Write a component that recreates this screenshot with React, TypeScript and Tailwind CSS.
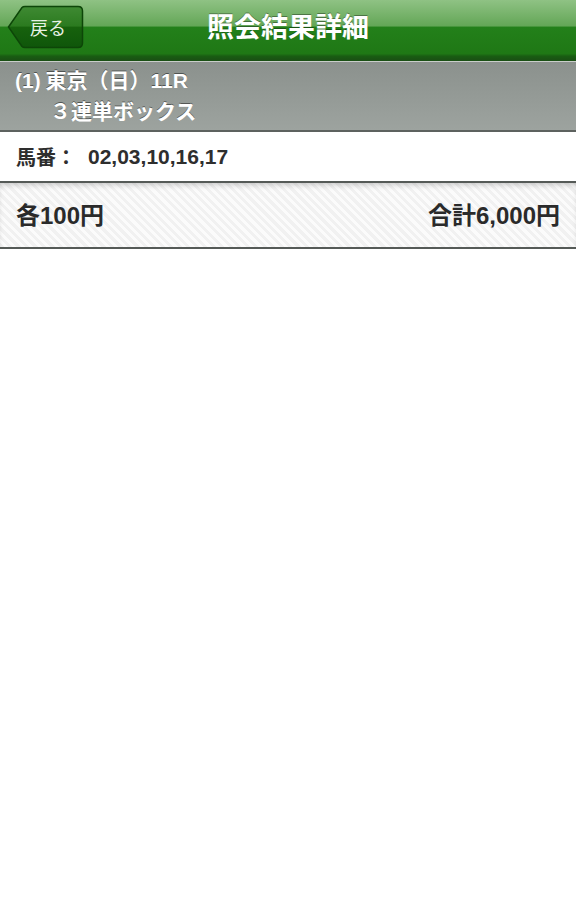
function BackButton() {
  return (
    <button
      type="button"
      className="relative ml-[7px] mt-[5px] flex h-[44px] w-[77px] items-center self-start"
    >
      <svg className="absolute inset-0" width="77" height="44" viewBox="0 0 77 44">
        <defs>
          <linearGradient id="bk" x1="0" y1="0" x2="0" y2="1">
            <stop offset="0" stopColor="#3f8a33" />
            <stop offset="0.48" stopColor="#2b7a1f" />
            <stop offset="0.5" stopColor="#17620d" />
            <stop offset="1" stopColor="#0f560a" />
          </linearGradient>
        </defs>
        <path
          d="M1.5 22 L15 2.5 Q16 1.5 18 1.5 L71 1.5 Q75.5 1.5 75.5 6 L75.5 38 Q75.5 42.5 71 42.5 L18 42.5 Q16 42.5 15 41.5 Z"
          fill="url(#bk)"
          stroke="#0d4608"
          strokeWidth="1.5"
        />
      </svg>
      <span className="relative ml-[23px] text-[18px] leading-[24px] text-[#e8f2e6]">戻る</span>
    </button>
  )
}

export default function App() {
  return (
    <div className="min-h-[903px] w-[576px] bg-white font-['Noto_Sans_CJK_JP','Liberation_Sans',sans-serif]">
      <header className="relative flex h-[61px] bg-[linear-gradient(to_bottom,#8fc284_0%,#63a656_43%,#23801a_44%,#1f7815_88%,#195d12_92%,#1a4e14_100%)]">
        <BackButton />
        <h1 className="absolute left-0 right-0 top-[8px] text-center text-[27px] font-bold leading-[36px] text-white [text-shadow:0_-1px_0_rgba(0,0,0,0.35)]">
          照会結果詳細
        </h1>
      </header>
      <div className="h-[1px] bg-[#c9cdca]" />
      <section className="h-[70px] border-b-2 border-[#5d625f] bg-[linear-gradient(to_bottom,#8b918d,#9da39f)] pl-[15px] pt-[3px] text-white [text-shadow:0_-1px_0_rgba(0,0,0,0.45)]">
        <div className="text-[21px] font-bold leading-[28px]">
          <span className="font-['Liberation_Sans',sans-serif]">(1)</span> 東京（日）
          <span className="font-['Liberation_Sans',sans-serif]">11R</span>
        </div>
        <div className="pl-[35px] text-[21px] font-bold leading-[30px]">３連単ボックス</div>
      </section>
      <div className="flex h-[51px] items-center border-b-2 border-[#555a57] px-[16px] text-[20px] font-bold text-[#2e2e2e]">
        <span>馬番：</span>
        <span className="ml-[12px] text-[21px] font-['Liberation_Sans',sans-serif]">02,03,10,16,17</span>
      </div>
      <div className="flex h-[66px] items-center justify-between border-b-2 border-[#555a57] bg-[repeating-linear-gradient(45deg,#f1f1f1_0px,#f1f1f1_3px,#fbfbfb_3px,#fbfbfb_6px)] px-[16px] text-[24px] font-bold text-[#2a2a2a] shadow-[inset_0_4px_6px_-3px_rgba(0,0,0,0.25)]">
        <span>
          各<span className="font-['Liberation_Sans',sans-serif]">100</span>円
        </span>
        <span>
          合計<span className="font-['Liberation_Sans',sans-serif]">6,000</span>円
        </span>
      </div>
    </div>
  )
}
